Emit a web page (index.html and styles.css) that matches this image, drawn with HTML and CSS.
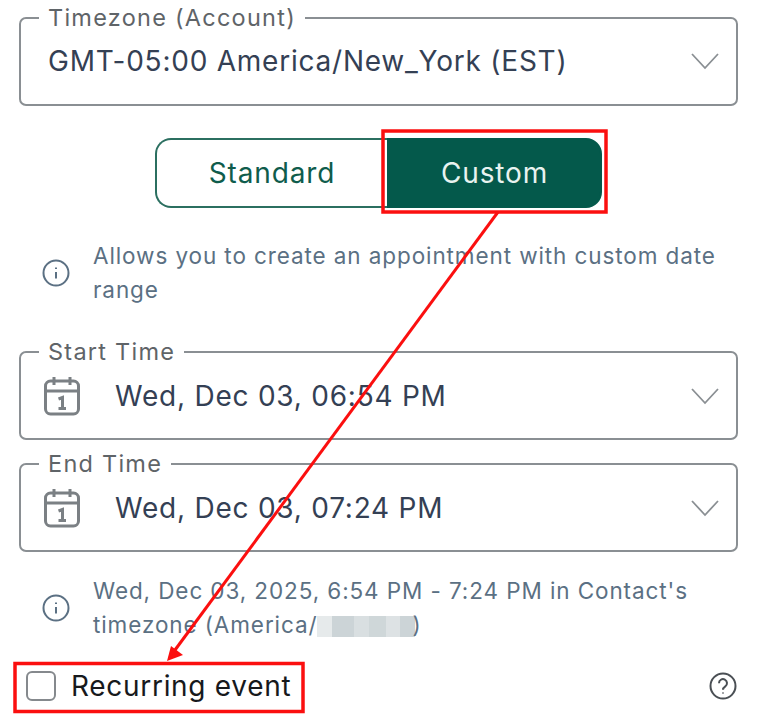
FILE: index.html
```html
<!DOCTYPE html>
<html lang="en">
<head>
    <meta charset="UTF-8">
    <meta name="viewport" content="width=device-width, initial-scale=1.0">
    <title>Appointment</title>
    <link rel="stylesheet" href="styles.css">
</head>
<body>
    <div class="form">
        <fieldset class="field field-timezone">
            <legend>Timezone (Account)</legend>
            <div class="field-row">
                <span class="field-value">GMT-05:00 America/New_York (EST)</span>
                <svg class="chevron" viewBox="0 0 30 18"><path d="M2 2l13 14L28 2"/></svg>
            </div>
        </fieldset>

        <div class="toggle">
            <div class="toggle-item">Standard</div>
            <div class="toggle-item active">Custom</div>
        </div>

        <div class="info info-top">
            <svg class="round-icon" viewBox="0 0 28 28"><circle cx="14" cy="14" r="12.5"/><path d="M14 13v6.5M14 8.5v1.4"/></svg>
            <p>Allows you to create an appointment with custom date range</p>
        </div>

        <fieldset class="field field-start">
            <legend>Start Time</legend>
            <div class="field-row date-row">
                <svg class="calendar" viewBox="0 0 36 40"><rect x="1.5" y="5" width="33" height="33" rx="5"/><path d="M1.500 15h33M10 1v8M26 1v8"/><path class="one" d="M14.500 23l4-1.500V32M14.500 32.500h7.500"/></svg>
                <span class="field-value date">Wed, Dec 03, 06:54 PM</span>
                <svg class="chevron" viewBox="0 0 30 18"><path d="M2 2l13 14L28 2"/></svg>
            </div>
        </fieldset>

        <fieldset class="field field-end">
            <legend>End Time</legend>
            <div class="field-row date-row">
                <svg class="calendar" viewBox="0 0 36 40"><rect x="1.5" y="5" width="33" height="33" rx="5"/><path d="M1.500 15h33M10 1v8M26 1v8"/><path class="one" d="M14.500 23l4-1.500V32M14.500 32.500h7.500"/></svg>
                <span class="field-value date">Wed, Dec 03, 07:24 PM</span>
                <svg class="chevron" viewBox="0 0 30 18"><path d="M2 2l13 14L28 2"/></svg>
            </div>
        </fieldset>

        <div class="info info-bottom">
            <svg class="round-icon" viewBox="0 0 28 28"><circle cx="14" cy="14" r="12.5"/><path d="M14 13v6.5M14 8.5v1.4"/></svg>
            <p>Wed, Dec 03, 2025, 6:54 PM - 7:24 PM in Contact's timezone (America/<span class="blurred"></span>)</p>
        </div>

        <div class="recurring">
            <label class="check">
                <span class="check-box"></span>
                <span>Recurring event</span>
            </label>
            <svg class="help-icon" viewBox="0 0 28 28"><circle cx="14" cy="14" r="12.5"/><path d="M10 11.2a4 4 0 1 1 6.3 3.2c-1.4 1-2.3 1.7-2.3 3.3M14 20.6v1"/></svg>
        </div>
    </div>

    <!-- red markup drawn on top of the screenshot -->
    <svg class="markup" viewBox="0 0 757 721">
        <rect x="383" y="131" width="223" height="81"/>
        <rect x="15" y="663.500" width="288" height="48"/>
        <path class="line" d="M498 212L175 650"/>
        <path class="head" d="M167 661l4-15 12 9z"/>
    </svg>
</body>
</html>
```

FILE: styles.css
```css
html, body {
    margin: 0;
    padding: 0;
    height: 721px;
    overflow: hidden;
    background-color: #fff;
}
body {
    font-family: Inter, "Liberation Sans", sans-serif;
    color: #344054;
    position: relative;
}
.form {
    padding: 5px 19px 0 19px;
}
.field {
    height: 101px;
    margin: 0;
    padding: 0 16px 0 20px;
    border: 2px solid #8a8f93;
    border-radius: 7px;
    box-sizing: border-box;
    min-width: 0;
}
.field legend {
    padding: 0 9px;
    margin-left: -2px;
    font-size: 23.5px;
    line-height: 26px;
    letter-spacing: 1.25px;
    color: #5f6468;
}
.field-row {
    display: flex;
    align-items: center;
    height: 56px;
    margin-top: 2px;
}
.field-row.date-row {
    margin-top: 3px;
}
.field-timezone .field-row {
    margin-left: 7px;
}
.field-value {
    flex: 1;
    font-size: 28px;
    letter-spacing: 0.77px;
    color: #344054;
    white-space: nowrap;
}
.field-value.date {
    margin-left: 35px;
}
.chevron {
    width: 30px;
    height: 18px;
    fill: none;
    stroke: #8a8f93;
    stroke-width: 1.8;
}
.calendar {
    width: 36px;
    height: 40px;
    margin-left: 3px;
    fill: none;
    stroke: #7b8084;
    stroke-width: 3;
}
.toggle {
    display: flex;
    width: 447px;
    height: 70px;
    margin: 32px auto 0 auto;
    box-sizing: border-box;
    font-size: 28px;
    letter-spacing: 0.85px;
}
.toggle-item {
    display: flex;
    align-items: center;
    justify-content: center;
    box-sizing: border-box;
    color: #0f5c4c;
    border: 2px solid #2b6f60;
}
.toggle-item:first-child {
    width: 232px;
    border-right: none;
    border-radius: 16px 0 0 16px;
}
.toggle-item.active {
    width: 215px;
    color: #e9f3f0;
    background-color: #04594b;
    border-color: #04594b;
    border-radius: 0 16px 16px 0;
}
.info {
    display: flex;
    align-items: center;
    gap: 23px;
    padding-left: 23px;
    color: #5b7083;
    font-size: 22.5px;
    line-height: 33.5px;
    letter-spacing: 0.9px;
}
.info p {
    margin: 0;
}
.info-top {
    margin-top: 31px;
    margin-bottom: 33px;
}
.info-bottom {
    margin-top: 22px;
}
.field-end {
    margin-top: 11px;
}
.round-icon, .help-icon {
    width: 28px;
    height: 28px;
    flex: none;
    fill: none;
    stroke: #5b7083;
    stroke-width: 2;
}
.help-icon {
    stroke: #4a4f54;
}
.blurred {
    display: inline-block;
    width: 98px;
    height: 21px;
    margin-right: -3px;
    vertical-align: -4px;
    background: linear-gradient(90deg, #e6eaeb 0 15%, #ccd4d7 15% 38%, #d9dfe1 38% 53%, #cfd7d9 53% 70%, #dde2e4 70% 85%, #ccd4d7 85% 100%);
}
.recurring {
    display: flex;
    align-items: center;
    justify-content: space-between;
    margin-top: 28px;
    padding-left: 7px;
    padding-right: 1px;
}
.check {
    display: flex;
    align-items: center;
    gap: 15px;
    font-size: 28px;
    letter-spacing: 0.7px;
    color: #17191c;
}
.check-box {
    width: 26px;
    height: 26px;
    border: 2px solid #85898d;
    border-radius: 6px;
}
.markup {
    position: absolute;
    top: 0;
    left: 0;
    width: 757px;
    height: 721px;
    fill: none;
    stroke: #fb0f0f;
    stroke-width: 3.5;
}
.markup .line {
    stroke-width: 3;
}
.markup .head {
    fill: #fb0f0f;
    stroke: none;
}
```
